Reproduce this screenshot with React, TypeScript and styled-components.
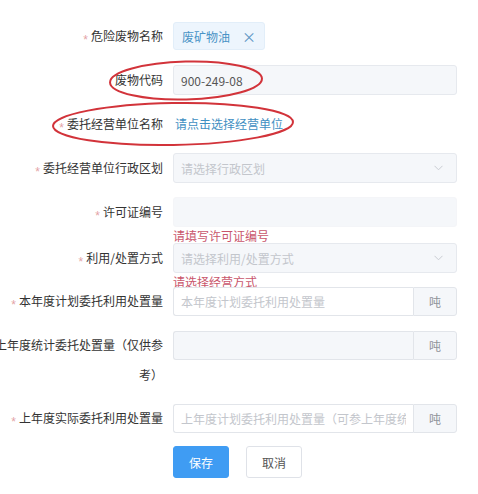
import styled, { createGlobalStyle } from "styled-components";

const Global = createGlobalStyle`
  html, body {
    margin: 0;
    padding: 0;
    background: #fff;
  }
  body {
    font-family: "Noto Sans CJK SC", "Liberation Sans", sans-serif;
    font-size: 12px;
    color: #333;
  }
`;

type Field = {
  label: string;
  required?: boolean;
  error?: string;
  tall?: boolean;
  extraSpace?: number;
  control: React.ReactNode;
};

function Chevron() {
  return (
    <svg width="9" height="6" viewBox="0 0 9 6" aria-hidden="true">
      <path d="M0.5 0.8 L4.5 4.8 L8.5 0.8" fill="none" stroke="#c9ccd2" strokeWidth="1" />
    </svg>
  );
}

// built inside a function so the styled parts below exist by then
function buildFields(): Field[] {
  return [
    {
      label: "危险废物名称",
      required: true,
      control: (
        <Tag>
          废矿物油<TagClose>×</TagClose>
        </Tag>
      ),
    },
    {
      label: "废物代码",
      control: <Input $disabled>900-249-08</Input>,
    },
    {
      label: "委托经营单位名称",
      required: true,
      control: <Link>请点击选择经营单位</Link>,
    },
    {
      label: "委托经营单位行政区划",
      required: true,
      control: (
        <Input $disabled>
          <Placeholder>请选择行政区划</Placeholder>
          <Chevron />
        </Input>
      ),
    },
    {
      label: "许可证编号",
      required: true,
      error: "请填写许可证编号",
      extraSpace: 2,
      control: <Input $disabled $soft />,
    },
    {
      label: "利用/处置方式",
      required: true,
      error: "请选择经营方式",
      extraSpace: -1,
      control: (
        <Input $disabled>
          <Placeholder>请选择利用/处置方式</Placeholder>
          <Chevron />
        </Input>
      ),
    },
    {
      label: "本年度计划委托利用处置量",
      required: true,
      control: (
        <Group>
          <GroupInput>
            <Placeholder>本年度计划委托利用处置量</Placeholder>
          </GroupInput>
          <Addon>吨</Addon>
        </Group>
      ),
    },
    {
      label: "上年度统计委托处置量（仅供参考）",
      tall: true,
      extraSpace: -1,
      control: (
        <Group>
          <GroupInput $disabled />
          <Addon>吨</Addon>
        </Group>
      ),
    },
    {
      label: "上年度实际委托利用处置量",
      required: true,
      extraSpace: -1,
      control: (
        <Group>
          <GroupInput>
            <Placeholder>上年度计划委托利用处置量（可参上年度统计委托处置量）</Placeholder>
          </GroupInput>
          <Addon>吨</Addon>
        </Group>
      ),
    },
  ];
}

export default function App() {
  const fields = buildFields();
  return (
    <Page>
      <Global />
      <Form>
        {fields.map((f) => (
          <Item key={f.label} $tall={f.tall} $extra={f.extraSpace ?? 0}>
            <Label $required={f.required}>{f.label}</Label>
            <Content>
              {f.control}
              {f.error && <ErrorText>{f.error}</ErrorText>}
            </Content>
          </Item>
        ))}
        <Item $extra={0}>
          <Label />
          <Buttons>
            <Button $primary>保存</Button>
            <Button>取消</Button>
          </Buttons>
        </Item>
      </Form>
      <Marks width="478" height="494" viewBox="0 0 478 494" aria-hidden="true">
        <ellipse cx="186" cy="80.5" rx="76" ry="19" transform="rotate(-1.5 186 80.5)" />
        <ellipse cx="173" cy="124" rx="120" ry="21" transform="rotate(-1 173 124)" />
      </Marks>
    </Page>
  );
}

const Page = styled.div`
  position: relative;
  width: 478px;
  height: 494px;
  overflow: hidden;
  background: #fff;
`;

const Form = styled.div`
  display: flex;
  flex-direction: column;
  gap: 14px;
  padding-top: 21px;
  margin-left: -7px;
  width: 471px;
`;

const Item = styled.div<{ $tall?: boolean; $extra: number }>`
  display: flex;
  align-items: flex-start;
  height: ${(p) => (p.$tall ? 60 : 30)}px;
  margin-bottom: ${(p) => p.$extra}px;
`;

const Label = styled.div<{ $required?: boolean }>`
  box-sizing: border-box;
  flex: 0 0 180px;
  width: 180px;
  padding-right: 10px;
  text-align: right;
  line-height: 30px;
  color: #333;

  &::before {
    content: ${(p) => (p.$required ? "'*'" : "none")};
    position: relative;
    top: 3px;
    line-height: 0;
    font-family: "Liberation Sans", sans-serif;
    color: #e3a3a6;
    margin-right: 3px;
  }
`;

const Content = styled.div`
  position: relative;
  flex: 0 0 284px;
  width: 284px;
  height: 30px;
  display: flex;
  align-items: center;
`;

const Tag = styled.span`
  display: inline-flex;
  align-items: center;
  box-sizing: border-box;
  height: 28px;
  padding: 0 8px;
  background: #edf5fd;
  border: 1px solid #e2eef9;
  border-radius: 3px;
  color: #4a93c6;
`;

const TagClose = styled.span`
  margin-left: 12px;
  font-size: 14px;
  color: #5c97c4;
`;

const Input = styled.div<{ $disabled?: boolean; $soft?: boolean }>`
  box-sizing: border-box;
  width: 100%;
  height: 30px;
  display: flex;
  align-items: center;
  justify-content: space-between;
  padding: 0 13px 0 7px;
  background: ${(p) => (p.$disabled ? "#f5f7fa" : "#fff")};
  border: 1px solid ${(p) => (p.$soft ? "#f4f5f8" : p.$disabled ? "#e6e9ee" : "#dcdfe6")};
  border-radius: 3px;
  color: #555;
`;

const Placeholder = styled.span`
  min-width: 0;
  color: #c3c6cc;
  white-space: nowrap;
  overflow: hidden;
`;

const Link = styled.span`
  color: #3f8fc2;
  line-height: 30px;
  padding-left: 2px;
`;

const ErrorText = styled.div`
  position: absolute;
  top: 100%;
  left: 0;
  padding-top: 3px;
  line-height: 12px;
  color: #c9566c;
`;

const Group = styled.div`
  display: flex;
  width: 100%;
  height: 29px;
`;

const GroupInput = styled.div<{ $disabled?: boolean }>`
  box-sizing: border-box;
  flex: 1;
  min-width: 0;
  display: flex;
  align-items: center;
  padding: 0 7px;
  background: ${(p) => (p.$disabled ? "#f5f7fa" : "#fff")};
  border: 1px solid #e2e5ea;
  border-right: none;
  border-radius: 3px 0 0 3px;
  overflow: hidden;
`;

const Addon = styled.div`
  box-sizing: border-box;
  flex: 0 0 44px;
  display: flex;
  align-items: center;
  justify-content: center;
  background: #f5f7fa;
  border: 1px solid #e2e5ea;
  border-radius: 0 3px 3px 0;
  color: #909399;
`;

const Buttons = styled.div`
  display: flex;
  gap: 17px;
`;

const Button = styled.button<{ $primary?: boolean }>`
  box-sizing: border-box;
  width: 56px;
  height: 32px;
  border-radius: 3px;
  font-family: inherit;
  font-size: 12px;
  cursor: pointer;
  border: 1px solid ${(p) => (p.$primary ? "#3f9cf3" : "#dfe2e8")};
  background: ${(p) => (p.$primary ? "#3f9cf3" : "#fff")};
  color: ${(p) => (p.$primary ? "#fff" : "#555")};
`;

const Marks = styled.svg`
  position: absolute;
  top: 0;
  left: 0;
  pointer-events: none;

  ellipse {
    fill: none;
    stroke: #d2333a;
    stroke-width: 2;
  }
`;
